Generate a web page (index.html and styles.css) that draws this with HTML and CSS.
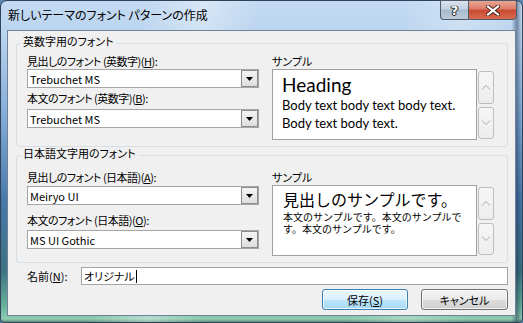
FILE: index.html
```html
<!DOCTYPE html>
<html lang="ja">
<head>
<meta charset="UTF-8" />
<title>新しいテーマのフォント パターンの作成</title>
<link rel="stylesheet" href="styles.css">
</head>
<body>
  <div class="window">
    <!-- Title bar -->
    <div class="titlebar">
      <span class="title">新しいテーマのフォント パターンの作成</span>
      <div class="caption-btns">
        <div class="cap cap-help">?</div>
        <div class="cap cap-close">
          <svg width="14" height="11" viewBox="0 0 14 11">
            <path d="M2 1.5 L12 9.5 M12 1.5 L2 9.5" stroke="#4a2018" stroke-width="4" stroke-linecap="square" fill="none"/>
            <path d="M2 1.5 L12 9.5 M12 1.5 L2 9.5" stroke="#fff" stroke-width="2.2" stroke-linecap="square" fill="none"/>
          </svg>
        </div>
      </div>
    </div>

    <div class="client">
      <!-- Latin fonts -->
      <fieldset class="group group-latin">
        <legend>英数字用のフォント</legend>
        <div class="group-body">
          <div class="fields">
            <div class="label">見出しのフォント (英数字)(<u>H</u>):</div>
            <div class="combo"><span class="combo-text">Trebuchet MS</span><span class="combo-btn"><svg width="7" height="4" viewBox="0 0 7 4"><path d="M0 0 H7 L3.5 4 Z" fill="#000"/></svg></span></div>
            <div class="label label-second">本文のフォント (英数字)(<u>B</u>):</div>
            <div class="combo combo-second"><span class="combo-text">Trebuchet MS</span><span class="combo-btn"><svg width="7" height="4" viewBox="0 0 7 4"><path d="M0 0 H7 L3.5 4 Z" fill="#000"/></svg></span></div>
          </div>
          <div class="sample">
            <div class="label">サンプル</div>
            <div class="sample-row">
              <div class="sample-box sample-latin">
                <div class="sample-heading">Heading</div>
                <div class="sample-body">Body text body text body text.<br>Body text body text.</div>
              </div>
              <div class="scroll">
                <div class="sbtn"><svg width="10" height="6" viewBox="0 0 10 6"><path d="M1 5.5 L5 1.5 L9 5.5" stroke="#a8a8a8" fill="none"/></svg></div>
                <div class="sbtn"><svg width="10" height="6" viewBox="0 0 10 6"><path d="M1 0.5 L5 4.5 L9 0.5" stroke="#a8a8a8" fill="none"/></svg></div>
              </div>
            </div>
          </div>
        </div>
      </fieldset>

      <!-- Japanese fonts -->
      <fieldset class="group group-jp">
        <legend>日本語文字用のフォント</legend>
        <div class="group-body">
          <div class="fields">
            <div class="label">見出しのフォント (日本語)(<u>A</u>):</div>
            <div class="combo"><span class="combo-text">Meiryo UI</span><span class="combo-btn"><svg width="7" height="4" viewBox="0 0 7 4"><path d="M0 0 H7 L3.5 4 Z" fill="#000"/></svg></span></div>
            <div class="label label-second">本文のフォント (日本語)(<u>O</u>):</div>
            <div class="combo combo-second"><span class="combo-text">MS UI Gothic</span><span class="combo-btn"><svg width="7" height="4" viewBox="0 0 7 4"><path d="M0 0 H7 L3.5 4 Z" fill="#000"/></svg></span></div>
          </div>
          <div class="sample">
            <div class="label">サンプル</div>
            <div class="sample-row">
              <div class="sample-box sample-jp">
                <div class="sample-heading">見出しのサンプルです。</div>
                <div class="sample-body">本文のサンプルです。本文のサンプルで<br>す。本文のサンプルです。</div>
              </div>
              <div class="scroll">
                <div class="sbtn"><svg width="10" height="6" viewBox="0 0 10 6"><path d="M1 5.5 L5 1.5 L9 5.5" stroke="#a8a8a8" fill="none"/></svg></div>
                <div class="sbtn"><svg width="10" height="6" viewBox="0 0 10 6"><path d="M1 0.5 L5 4.5 L9 0.5" stroke="#a8a8a8" fill="none"/></svg></div>
              </div>
            </div>
          </div>
        </div>
      </fieldset>

      <!-- Name -->
      <div class="name-row">
        <span class="name-label">名前(<u>N</u>):</span>
        <div class="name-input">オリジナル<span class="caret"></span></div>
      </div>

      <div class="buttons">
        <div class="btn btn-default">保存(<u>S</u>)</div>
        <div class="btn">キャンセル</div>
      </div>
    </div>
  </div>
</body>
</html>
```

FILE: styles.css
```css
/* Base */
* {
  box-sizing: border-box;
}
html, body {
  margin: 0;
  padding: 0;
  width: 523px;
  height: 323px;
  overflow: hidden;
}
body {
  font-family: "Noto Sans CJK JP", sans-serif;
  font-size: 11px;
  font-feature-settings: "palt";
  color: #000;
  background: #5b87b4;
}
u {
  text-decoration: underline;
  text-underline-offset: 1px;
}

/* Aero frame */
.window {
  width: 523px;
  height: 323px;
  display: flex;
  flex-direction: column;
  padding: 0 6px 6px;
  border: 1px solid #2f4259;
  border-radius: 7px 7px 4px 4px;
  background:
    linear-gradient(to right, rgba(0,0,0,0) 98%, rgba(20,40,70,0.45) 99%, rgba(0,0,0,0) 100%),
    linear-gradient(100deg, rgba(255,255,255,0) 25%, rgba(255,255,255,0.35) 35%, rgba(255,255,255,0) 45%, rgba(255,255,255,0) 70%, rgba(255,255,255,0.25) 80%, rgba(255,255,255,0) 90%),
    linear-gradient(to bottom, #c2daf2 0, #bcd5ef 30px, #86afd9 110px, #4878ab 200px, #3a7482 270px, #68b098 305px, #8fcbb2 318px, #3c6a5c 323px);
}

.titlebar {
  height: 29px;
  display: flex;
  align-items: flex-start;
  padding-left: 1px;
}
.title {
  margin-top: 6px;
  line-height: 16px;
  font-size: 12px;
  color: #000;
}

.caption-btns {
  margin-left: auto;
  margin-top: -1px;
  margin-right: -1px;
  display: flex;
}
.cap {
  height: 20px;
  display: flex;
  align-items: center;
  justify-content: center;
  border: 1px solid #4d5a6a;
}
.cap-help {
  width: 28px;
  border-right: none;
  border-radius: 0 0 0 4px;
  background: linear-gradient(to bottom, #d9e3ee 0, #c3d1e0 45%, #a8b9cc 50%, #bccbdb 100%);
  color: #fff;
  font-family: "DejaVu Sans", sans-serif;
  font-weight: bold;
  font-size: 13px;
  text-shadow: 0 0 1px #222, 0 0 1px #222, 1px 0 0 #333, -1px 0 0 #333, 0 1px 0 #333;
}
.cap-close {
  width: 49px;
  border-radius: 0 0 4px 0;
  background: linear-gradient(to bottom, #e9a696 0, #dc7a66 45%, #c94a32 50%, #d86a4e 100%);
}

/* Client area */
.client {
  flex: 1;
  background: #f0f0f0;
  border: 1px solid #6f8297;
  display: flex;
  flex-direction: column;
}

.group {
  margin: 4px 7px 0 8px;
  padding: 2px 13px 6px 10px;
  border: 1px solid #d5dfe5;
  border-radius: 3px;
  min-width: 0;
}
.group legend {
  margin-left: -6px;
  padding: 0 2px 4px;
  line-height: 12px;
}
.group-jp {
  margin-top: 0;
  padding-top: 6px;
}

.group-body {
  display: flex;
  gap: 13px;
}
.fields {
  width: 232px;
  display: flex;
  flex-direction: column;
}
.label {
  line-height: 16px;
  height: 16px;
  white-space: nowrap;
}
.fields .label {
  letter-spacing: -0.5px;
}
.label-second {
  margin-top: 2px;
}
.group-jp .label-second {
  margin-top: 7px;
}
.combo-second {
  margin-top: 3px;
}
.group-jp .combo {
  margin-top: 1px;
}
.group-jp .combo-second {
  margin-top: 2px;
}

.combo {
  height: 19px;
  background: #fff;
  border: 1px solid #a5a5a5;
  display: flex;
  align-items: center;
  padding-left: 2px;
}
.combo-text {
  flex: 1;
  line-height: 16px;
}
.combo-btn {
  width: 17px;
  height: 17px;
  border: 1px solid #8d8d8d;
  background: linear-gradient(to bottom, #f4f4f4, #dedede);
  display: flex;
  align-items: center;
  justify-content: center;
}

/* Sample preview */
.sample {
  display: flex;
  flex-direction: column;
}
.sample-row {
  display: flex;
  gap: 1px;
  height: 71px;
}
.sample-box {
  width: 205px;
  background: #fff;
  border: 1px solid #a0a0a0;
  overflow: hidden;
  font-feature-settings: normal;
}
.sample-latin {
  padding: 3px 0 0 9px;
  font-family: "Lato", sans-serif;
}
.sample-latin .sample-heading {
  font-size: 19px;
  line-height: 23px;
}
.sample-latin .sample-body {
  font-size: 13px;
  line-height: 18px;
}
.sample-jp {
  padding: 1px 0 0 10px;
}
.sample-jp .sample-heading {
  font-size: 16px;
  line-height: 24px;
}
.sample-jp .sample-body {
  font-size: 10px;
  line-height: 12px;
}

.scroll {
  width: 16px;
  padding: 2px 0 1px;
  display: flex;
  flex-direction: column;
  gap: 3px;
}
.sbtn {
  flex: 1;
  border: 1px solid #bdbdbd;
  border-radius: 3px;
  background: linear-gradient(to bottom, #f6f6f6, #ededed);
  display: flex;
  align-items: center;
  justify-content: center;
}

/* Name row and buttons */
.name-row {
  margin: 4px 7px 0 19px;
  display: flex;
  align-items: center;
  height: 18px;
}
.name-label {
  width: 54px;
  line-height: 16px;
}
.name-input {
  flex: 1;
  height: 18px;
  background: #fff;
  border: 1px solid #a5a5a5;
  padding-left: 2px;
  line-height: 16px;
  display: flex;
  align-items: center;
}
.caret {
  width: 1px;
  height: 13px;
  background: #000;
  margin-left: 1px;
}

.buttons {
  margin: 4px 7px 0 0;
  display: flex;
  justify-content: flex-end;
  gap: 13px;
}
.btn {
  width: 87px;
  height: 21px;
  border: 1px solid #707070;
  border-radius: 3px;
  background: linear-gradient(to bottom, #f2f2f2 0, #ebebeb 50%, #dddddd 50%, #cfcfcf 100%);
  display: flex;
  align-items: center;
  justify-content: center;
  line-height: 16px;
  box-shadow: inset 0 0 0 1px rgba(255,255,255,0.7);
}
.btn-default {
  width: 86px;
  border-color: #3c7fb1;
  background: linear-gradient(to bottom, #eaf6fd 0, #d9f0fc 50%, #bee6fd 50%, #a7d9f5 100%);
}
```
